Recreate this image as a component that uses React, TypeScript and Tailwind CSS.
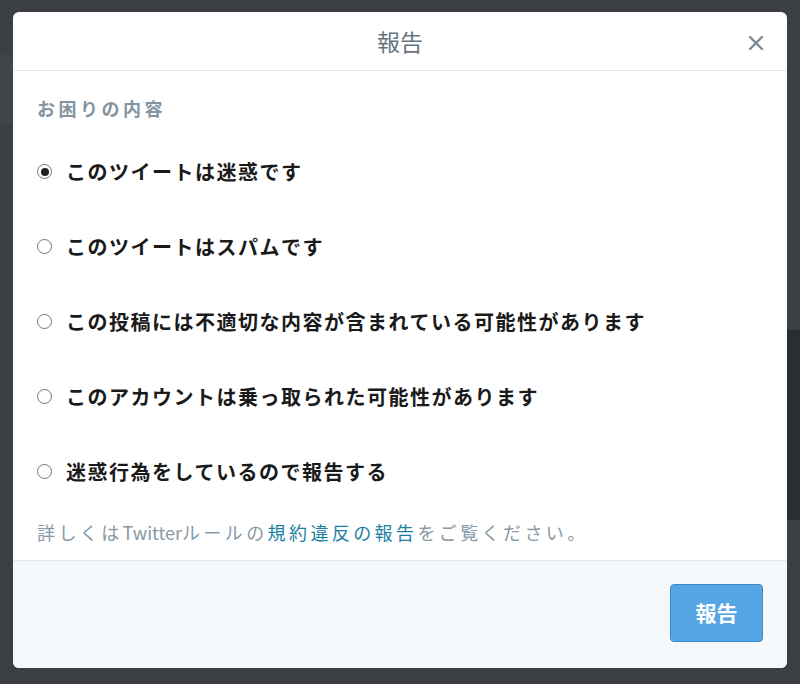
import React, { useState } from "react";

const options = [
  "このツイートは迷惑です",
  "このツイートはスパムです",
  "この投稿には不適切な内容が含まれている可能性があります",
  "このアカウントは乗っ取られた可能性があります",
  "迷惑行為をしているので報告する",
];

const Radio: React.FC<{ checked: boolean }> = ({ checked }) => (
  <span className="flex h-[15px] w-[15px] shrink-0 items-center justify-center rounded-full border border-[#767676] bg-white">
    {checked && <span className="h-[8px] w-[8px] rounded-full bg-[#222]"></span>}
  </span>
);

const App: React.FC = () => {
  const [selected, setSelected] = useState(0);

  return (
    <div
      className="relative h-[684px] w-[800px] overflow-hidden bg-[#3b3f43] pl-[13px] pt-[12px]"
      style={{ fontFamily: "'Noto Sans CJK JP', 'Noto Sans', sans-serif" }}
    >
      {/* faint page behind the overlay */}
      <div className="absolute right-0 top-[330px] h-[190px] w-[13px] bg-[#2b2e31]"></div>
      <div className="absolute left-0 top-[55px] h-[70px] w-[13px] bg-[#40454a]"></div>

      {/* Modal */}
      <div className="relative flex h-[656px] w-[774px] flex-col overflow-hidden rounded-[6px] bg-white">
        {/* Header */}
        <div className="relative flex h-[59px] shrink-0 items-center justify-center border-b border-[#e1e8ed]">
          <h1 className="text-[23px] leading-none text-[#66757f]">報告</h1>
          <button className="absolute right-[22px] top-[22px] flex h-[18px] w-[18px] items-center justify-center">
            <svg width="16" height="16" viewBox="0 0 16 16" fill="none">
              <path d="M2 2L14 14M14 2L2 14" stroke="#7b8a96" strokeWidth="2.4" strokeLinecap="round" />
            </svg>
          </button>
        </div>

        {/* Body */}
        <div className="shrink-0 px-[24px] pb-[16px] pt-[25px]">
          <div className="h-[24px] text-[18px] font-bold leading-[24px] tracking-[3.5px] text-[#8494a0]">
            お困りの内容
          </div>

          <div className="mt-[14px] flex flex-col">
            {options.map((label, i) => (
              <label
                key={i}
                className="flex h-[75px] cursor-pointer items-center gap-[14px]"
                onClick={() => setSelected(i)}
              >
                <Radio checked={selected === i} />
                <span className="text-[20px] font-bold leading-none tracking-[1.5px] text-[#1a1a1a]">
                  {label}
                </span>
              </label>
            ))}
          </div>

          <p className="mt-[11px] h-[24px] text-[18px] leading-[24px] tracking-[3.4px] text-[#8899a6]">
            詳しくは<span className="tracking-normal">Twitter</span>ルールの
            <a className="text-[#1b7fa3]">規約違反の報告</a>
            をご覧ください。
          </p>
        </div>

        {/* Footer */}
        <div className="flex flex-1 justify-end border-t border-[#e1e8ed] bg-[#f5f8fa] px-[24px] pt-[23px]">
          <button className="h-[58px] w-[93px] rounded-[4px] border border-[#3d8ac9] bg-[#56a6e6] text-[21px] font-bold text-white">
            報告
          </button>
        </div>
      </div>
    </div>
  );
};

export default App;
